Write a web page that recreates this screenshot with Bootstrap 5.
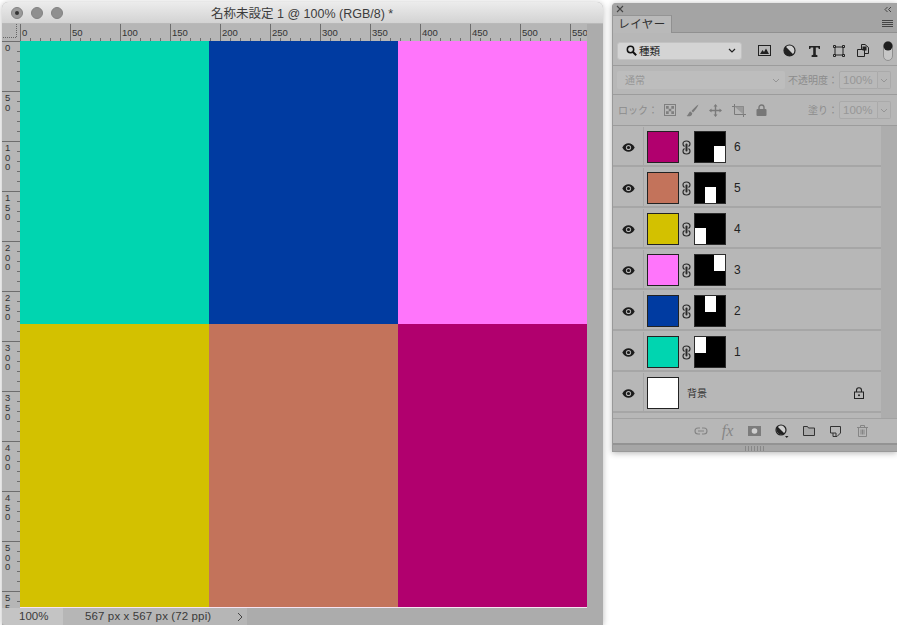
<!DOCTYPE html>
<html lang="ja">
<head>
<meta charset="utf-8">
<title>名称未設定 1</title>
<link href="https://cdn.jsdelivr.net/npm/bootstrap@5.3.0/dist/css/bootstrap.min.css" rel="stylesheet">
<style>
html,body{margin:0;height:100%;overflow:hidden;background:#fff}
body{font-family:"Liberation Sans","Noto Sans CJK JP",sans-serif;color:#2b2b2b}
.stage{width:897px;height:625px;padding-top:2px;padding-left:2px;gap:9px;overflow:hidden}
.docwin{width:601px;height:623px;border-radius:6px 6px 0 0;background:#acacac;box-shadow:0 1px 6px rgba(0,0,0,.28);overflow:hidden;flex:none}
.titlebar{height:22px;background:linear-gradient(#ececec,#d3d3d3);border-bottom:1px solid #b9b9b9;font-size:12.5px;color:#3c3c3c;padding-left:9px;position:relative;flex:none}
.lights{gap:8px}
.lightdot{width:12px;height:12px;border-radius:50%;background:#8f8f8f;border:1px solid #828282}
.lightdot.first{background:#9a9a9a;display:flex;align-items:center;justify-content:center}
.lightdot.first::after{content:"";width:4px;height:4px;border-radius:50%;background:#333}
.titletext{position:absolute;left:209px;top:4px;white-space:nowrap;line-height:16px}
.rulertop{height:17px;background:#b6b6b6;flex:none}
.corner{width:18px;height:17px;background:#b6b6b6;flex:none;display:block}
.rulerh{width:567px;height:17px;flex:none;display:block}
.rulerfill{flex:1;background:#acacac}
.docmain{height:567px;flex:none}
.rulerv{width:18px;height:567px;flex:none;display:block;background:#b6b6b6}
.canvasgrid{display:grid;grid-template-columns:repeat(3,189px);grid-template-rows:283px 283px;width:567px;height:567px;flex:none;border-bottom:1px solid #f6e4f2;box-sizing:border-box}
.c1{background:#00d5b0}.c2{background:#003ba1}.c3{background:#ff75fb}.c4{background:#d3c100}.c5{background:#c3735b}.c6{background:#b1006e}
.statusbar{height:17px;background:#acacac;font-size:11.5px;color:#3a3a3a;line-height:17px;flex:none}
.zoombox{width:61px;background:#c4c4c4;padding-left:17px;flex:none;border-bottom-left-radius:3px}
.infobox{width:184px;background:#b6b6b6;padding-left:22px;flex:none;position:relative;letter-spacing:.12px}
.chev{position:absolute;left:174px;top:4px}
.panelwin{width:285px;height:449px;margin-top:1px;background:#b7b7b7;border-radius:4px 0 0 0;box-shadow:0 1px 6px rgba(0,0,0,.3);flex:none;overflow:hidden;font-size:10px;color:#8a8a8a;border-left:1px solid #999}
.closebar{height:12px;background:#a4a4a4;color:#333;padding:0 5px 0 3px;flex:none}
.tabrow{height:18px;background:#a4a4a4;border-bottom:1px solid #909090;flex:none}
.tabon{width:59px;height:18px;background:#b9b9b9;border-right:1px solid #909090;border-top:1px solid #949494;color:#2e2e2e;font-size:11.5px;text-align:center;line-height:17px;letter-spacing:.5px}
.menuicon{margin-right:4px;margin-top:-1px}
.filterrow{height:33px;border-bottom:1px solid #9c9c9c;padding:3px 0 0 4px;flex:none}
.filtersel{width:125px;height:18px;background:#d4d4d4;border:1px solid #c2c2c2;border-radius:3px;color:#222;font-size:10.5px;padding:0 5px 0 8px;gap:2px;line-height:16px}
.ficons{margin-left:16px;gap:12px}
.switchic{margin-left:14px}
.blendrow{height:29px;border-bottom:1px solid #9c9c9c;padding-left:4px;flex:none}
.blendsel{width:168px;height:18px;background:#bdbdbd;border-radius:2px;padding:0 5px 0 8px;color:#979797;font-size:10px}
.optlabel{margin-left:3px;white-space:nowrap;color:#8c8c8c;font-size:10px}
.pctbox{width:39px;height:18px;border:1px solid #aaa;background:#b9b9b9;border-radius:2px 0 0 2px;color:#979797;font-size:11.5px;margin-left:1px;line-height:16px;padding-left:3px;overflow:hidden}
.pctdrop{width:13px;height:18px;border:1px solid #aaa;border-left:0;border-radius:0 2px 2px 0;flex:none}
.lockrow{height:31px;border-bottom:1px solid #9c9c9c;padding-left:5px;flex:none}
.lockicons{margin-left:6px;gap:10px}
.fillgroup{margin-left:auto;margin-right:6px}
.layerswrap{height:292px;flex:none}
.layerslist{width:268px;flex:none}
.scrolltrack{flex:1;background:#adadad}
.layerrow{height:41px;border-bottom:2px solid #a6a6a6;color:#222;font-size:12px;padding-top:3px}
.eyecell{width:31px;height:38px;margin-top:-3px;border-right:1px solid #a6a6a6;flex:none;padding-top:3px}
.thumb{width:32px;height:32px;border:1px solid #222;margin-left:3px;flex:none}
.bg-white-thumb{background:#fff}
.linkcell{width:15px;flex:none}
.maskthumb{width:32px;height:32px;background:#000;border:1px solid #2c2c2c;flex:none;display:flex}
.maskhole{width:11px;height:16px;background:#fff}
.layername{margin-left:8px}
.bgname{margin-left:8px;font-size:10px;color:#333}
.locked{margin-left:auto;margin-right:17px}
.panelfoot{height:25px;border-top:1px solid #a2a2a2;margin-top:0;padding-left:74px;flex:none}
.foot-item{width:27px;flex:none;display:flex;justify-content:center}
.fx{font-family:"Liberation Serif",serif;font-style:italic;font-size:16px;color:#868686;line-height:16px}
.gripbar{height:9px;background:#a6a6a6;border-top:2px solid #939393;border-bottom:1px solid #999;flex:none}
.gripdots{width:20px;height:5px;background:repeating-linear-gradient(90deg,#888 0 1px,transparent 1px 3px)}
svg{display:block;flex:none}
</style>
</head>
<body>
<div class="stage d-flex align-items-start">

  <div class="docwin d-flex flex-column">
    <div class="titlebar d-flex align-items-center">
      <div class="d-flex lights"><span class="lightdot first"></span><span class="lightdot"></span><span class="lightdot"></span></div>
      <div class="titletext">名称未設定 1 @ 100% (RGB/8) *</div>
    </div>
    <div class="rulertop d-flex">
      <svg class="corner" viewBox="0 0 18 17"><path d="M14.500 0v13.500M1 13.500h13.500" fill="none" stroke="#666" stroke-dasharray="1 1"/></svg>
      <svg class="rulerh" id="rh" viewBox="0 0 567 17"></svg>
      <div class="rulerfill"></div>
    </div>
    <div class="docmain d-flex">
      <svg class="rulerv" id="rv" viewBox="0 0 18 567"></svg>
      <div class="canvasgrid">
        <div class="c1"></div><div class="c2"></div><div class="c3"></div>
        <div class="c4"></div><div class="c5"></div><div class="c6"></div>
      </div>
    </div>
    <div class="statusbar d-flex">
      <div class="zoombox">100%</div>
      <div class="infobox">567 px x 567 px (72 ppi)
        <svg class="chev" width="6" height="10" viewBox="0 0 6 10"><path d="M1 1l4 4-4 4" fill="none" stroke="#444"/></svg>
      </div>
    </div>
  </div>

  <div class="panelwin d-flex flex-column">
    <div class="closebar d-flex justify-content-between align-items-center">
      <svg width="8" height="8" viewBox="0 0 8 8"><path d="M1 1l6 6M7 1L1 7" stroke="#444" stroke-width="1.100"/></svg>
      <svg width="8" height="7" viewBox="0 0 8 7"><path d="M3.500 1L1 3.500 3.500 6M7 1L4.500 3.500 7 6" fill="none" stroke="#444"/></svg>
    </div>
    <div class="tabrow d-flex justify-content-between align-items-center">
      <div class="tabon">レイヤー</div>
      <svg class="menuicon" width="11" height="7" viewBox="0 0 11 7"><path d="M0 .5h11M0 2.500h11M0 4.500h11M0 6.500h11" stroke="#444"/></svg>
    </div>
    <div class="filterrow d-flex align-items-center">
      <div class="filtersel d-flex align-items-center">
        <svg width="11" height="11" viewBox="0 0 11 11"><circle cx="4.500" cy="4.500" r="3.200" fill="none" stroke="#111" stroke-width="1.500"/><path d="M7 7l3.200 3.200" stroke="#111" stroke-width="2"/></svg>
        <span>種類</span>
        <svg class="ms-auto" width="8" height="5" viewBox="0 0 8 5"><path d="M1 1l3 3 3-3" fill="none" stroke="#222" stroke-width="1.200"/></svg>
      </div>
      <div class="d-flex align-items-center ficons">
        <svg width="13" height="11" viewBox="0 0 13 11"><rect x=".5" y=".5" width="12" height="10" fill="none" stroke="#222"/><path d="M2 9l2.500-4 1.500 2 2-3.500L11 9z" fill="#222"/></svg>
        <svg width="13" height="13" viewBox="0 0 13 13"><circle cx="6.500" cy="6.500" r="5.500" fill="#cfcfcf" stroke="#222" stroke-width="1.200"/><path d="M2.600 2.600A5.500 5.500 0 0 0 10.400 10.400z" fill="#222"/></svg>
        <svg width="13" height="12" viewBox="0 0 13 12"><path d="M1 1h11v3h-1.200l-.6-1.400H7.800v7.200l1.600.5V12H3.600v-1.700l1.600-.5V2.600H2.800L2.200 4H1z" fill="#222"/></svg>
        <svg width="12" height="12" viewBox="0 0 12 12"><path d="M2 2h8v8H2z" fill="none" stroke="#222"/><path d="M.5.5h2v2h-2zM9.500.5h2v2h-2zM.5 9.500h2v2h-2zM9.500 9.500h2v2h-2z" fill="#b7b7b7" stroke="#222"/></svg>
        <svg width="12" height="13" viewBox="0 0 12 13"><path d="M4.500 5V.5H8l3.500 3v6H8" fill="none" stroke="#222"/><path d="M.5 5.500h7v7h-7z" fill="#b7b7b7" stroke="#222"/><path d="M5.500 2.500h4v4h-4z" fill="#222"/></svg>
      </div>
      <svg class="switchic" width="10" height="20" viewBox="0 0 10 20"><rect x=".5" y=".5" width="9" height="19" rx="4.500" fill="#c6c6c6" stroke="#8f8f8f"/><circle cx="5" cy="5" r="4.500" fill="#1d1d1d"/></svg>
    </div>
    <div class="blendrow d-flex align-items-center">
      <div class="blendsel d-flex align-items-center justify-content-between"><span>通常</span>
        <svg width="8" height="5" viewBox="0 0 8 5"><path d="M1 1l3 3 3-3" fill="none" stroke="#959595"/></svg></div>
      <span class="optlabel">不透明度：</span>
      <div class="pctbox">100%</div>
      <div class="pctdrop d-flex align-items-center justify-content-center"><svg width="8" height="5" viewBox="0 0 8 5"><path d="M1 1l3 3 3-3" fill="none" stroke="#959595"/></svg></div>
    </div>
    <div class="lockrow d-flex align-items-center">
      <span class="optlabel m-0">ロック：</span>
      <div class="d-flex align-items-center lockicons">
        <svg width="12" height="12" viewBox="0 0 12 12"><rect x=".5" y=".5" width="11" height="11" fill="none" stroke="#7f7f7f"/><path d="M2 2h2.700v2.700H2zM7.300 2H10v2.700H7.300zM4.700 4.700h2.600v2.600H4.700zM2 7.300h2.700V10H2zM7.300 7.300H10V10H7.300z" fill="#7f7f7f"/></svg>
        <svg width="13" height="13" viewBox="0 0 13 13"><path d="M12.500.5C10 2 7.500 4.500 5.500 7l1.500 1.500C9.500 6 11.500 3 12.500.5z" fill="#7a7a7a"/><path d="M4.500 7.500C2.500 8 2.800 10.500.5 12c2.500.8 5.500.3 5.800-2.800z" fill="#7a7a7a"/></svg>
        <svg width="13" height="13" viewBox="0 0 13 13"><path d="M6.500 0l2 2.500H7.200v3.300h3.300V4.500l2.500 2-2.500 2V7.200H7.200v3.300h1.300l-2 2.500-2-2.500h1.300V7.200H2.500v1.300L0 6.500l2.500-2v1.300h3.300V2.500H4.500z" fill="#7a7a7a"/></svg>
        <svg width="14" height="13" viewBox="0 0 14 13"><path d="M0 2.500h11.500V13M2.500 0v10.500H14" fill="none" stroke="#7a7a7a"/><path d="M2.500 2.500h9v8z" fill="#9a9a9a"/></svg>
        <svg width="11" height="12" viewBox="0 0 11 12"><path d="M3 5V3.500a2.500 2.500 0 0 1 5 0V5" fill="none" stroke="#777" stroke-width="1.400"/><rect x=".5" y="5" width="10" height="7" rx="1" fill="#777"/></svg>
      </div>
      <div class="d-flex align-items-center fillgroup">
        <span class="optlabel">塗り：</span>
        <div class="pctbox">100%</div>
        <div class="pctdrop d-flex align-items-center justify-content-center"><svg width="8" height="5" viewBox="0 0 8 5"><path d="M1 1l3 3 3-3" fill="none" stroke="#959595"/></svg></div>
      </div>
    </div>
    <div class="layerswrap d-flex">
      <div class="layerslist" id="layers"></div>
      <div class="scrolltrack"></div>
    </div>
    <div class="panelfoot d-flex align-items-center">
      <div class="foot-item"><svg width="14" height="8" viewBox="0 0 14 8"><path d="M6 1H4a3 3 0 0 0 0 6h2M8 1h2a3 3 0 0 1 0 6H8M4 4h6" fill="none" stroke="#848484" stroke-width="1.100"/></svg></div>
      <div class="foot-item fx">fx</div>
      <div class="foot-item"><svg width="13" height="10" viewBox="0 0 13 10"><rect width="13" height="10" fill="#7c7c7c"/><circle cx="6.500" cy="5" r="2.800" fill="#d0d0d0"/></svg></div>
      <div class="foot-item"><svg width="14" height="14" viewBox="0 0 14 14"><circle cx="6" cy="6" r="5" fill="#cfcfcf" stroke="#222" stroke-width="1.200"/><path d="M2.500 2.500A5 5 0 0 0 9.500 9.500z" fill="#222"/><path d="M10 12h3.500l-1.750 2z" fill="#222"/></svg></div>
      <div class="foot-item"><svg width="12" height="10" viewBox="0 0 12 10"><path d="M.5 9.500V.5h4l1 1.500h6v7.500z" fill="#a9a9a9" stroke="#333"/></svg></div>
      <div class="foot-item"><svg width="11" height="11" viewBox="0 0 11 11"><path d="M.5.5h10v6.500L7 10.500H3V7H.5z" fill="none" stroke="#333"/><path d="M3 7h3v3" fill="none" stroke="#333"/></svg></div>
      <div class="foot-item"><svg width="11" height="12" viewBox="0 0 11 12"><path d="M0 2.500h11M3.500 2.500V.5h4v2M1.500 2.500v9h8v-9M4 4.500v5M5.500 4.500v5M7 4.500v5" fill="none" stroke="#858585"/></svg></div>
    </div>
    <div class="gripbar d-flex justify-content-center align-items-center"><div class="gripdots"></div></div>
  </div>
</div>
<script src="https://cdn.jsdelivr.net/npm/bootstrap@5.3.0/dist/js/bootstrap.bundle.min.js"></script>
<script>
(function(){
  var h='<path d="';
  for(var i=0;i<567;i+=10){var x=i+.5;var t=(i%50===0)?0:14;h+='M'+x+' '+t+'V17';}
  h+='" stroke="#6d6d6d" stroke-width="1" fill="none"/>';
  for(var n=0;n<=550;n+=50){h+='<text x="'+(n+2)+'" y="12" font-size="9.500" fill="#333" font-family="Liberation Sans">'+n+'</text>';}
  document.getElementById('rh').innerHTML=h;
  var v='<path d="';
  for(var j=0;j<567;j+=10){var y=j+.5;var l=(j%50===0)?0:15;v+='M'+l+' '+y+'H18';}
  v+='" stroke="#6d6d6d" stroke-width="1" fill="none"/>';
  for(var m=0;m<=550;m+=50){var s=String(m).split('');s.forEach(function(c,k){v+='<text x="3" y="'+(m+10+k*9.500)+'" font-size="9.500" fill="#333" font-family="Liberation Sans">'+c+'</text>';});}
  document.getElementById('rv').innerHTML=v;
  var eye='<svg width="13" height="9" viewBox="0 0 13 9"><path d="M.3 4.500C2 1.500 4 .3 6.500.3s4.500 1.200 6.200 4.200c-1.700 3-3.700 4.200-6.200 4.200S2 7.500.3 4.500z" fill="#1c1c1c"/><circle cx="6.500" cy="4.500" r="2.600" fill="#b7b7b7"/><circle cx="6.500" cy="4.500" r="1.600" fill="#1c1c1c"/></svg>';
  var link='<svg width="9" height="15" viewBox="0 0 9 15"><path d="M2.500 6.500C1 5.500 1 4.500 1 4a3.500 3 0 0 1 7 0c0 .5 0 1.500-1.500 2.500M2.500 8.500C1 9.500 1 10.500 1 11a3.500 3 0 0 0 7 0c0-.5 0-1.500-1.500-2.500" fill="none" stroke="#2a2a2a" stroke-width="1.200"/><rect x="3.500" y="3.500" width="2" height="8" rx="1" fill="#2a2a2a"/></svg>';
  var rows=[['6','c6','end','end'],['5','c5','center','end'],['4','c4','start','end'],['3','c3','end','start'],['2','c2','center','start'],['1','c1','start','start']];
  var out='';
  rows.forEach(function(r){
    out+='<div class="layerrow d-flex align-items-center"><div class="eyecell d-flex align-items-center justify-content-center">'+eye+'</div>'+
    '<div class="thumb '+r[1]+'"></div><div class="linkcell d-flex justify-content-center">'+link+'</div>'+
    '<div class="maskthumb justify-content-'+r[2]+' align-items-'+r[3]+'"><div class="maskhole"></div></div>'+
    '<span class="layername">'+r[0]+'</span></div>';
  });
  out+='<div class="layerrow d-flex align-items-center"><div class="eyecell d-flex align-items-center justify-content-center">'+eye+'</div>'+
    '<div class="thumb bg-white-thumb"></div><span class="bgname">背景</span>'+
    '<svg class="locked" width="10" height="12" viewBox="0 0 10 12"><path d="M2.500 5V3.200a2.500 2.500 0 0 1 5 0V5" fill="none" stroke="#222" stroke-width="1.100"/><rect x=".5" y="5" width="9" height="6.500" fill="none" stroke="#222"/><circle cx="5" cy="8.200" r="1" fill="#222"/></svg></div>';
  document.getElementById('layers').innerHTML=out;
})();
</script>
</body>
</html>
